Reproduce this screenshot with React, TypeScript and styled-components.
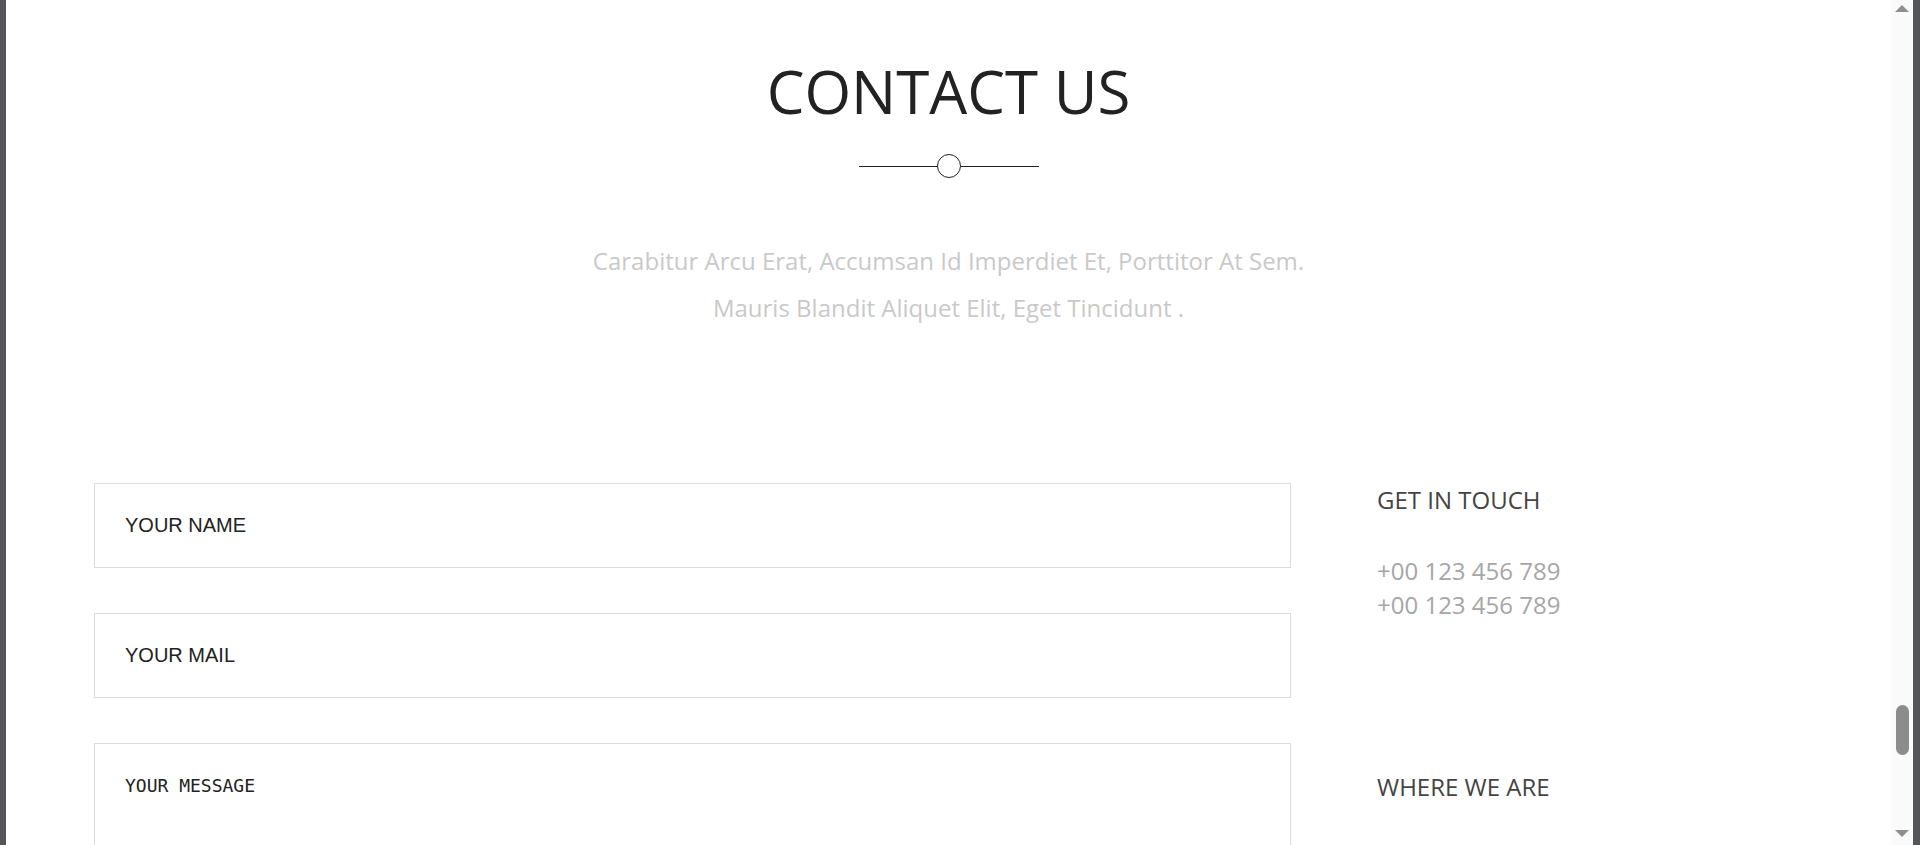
import React from "react";
import styled, { createGlobalStyle } from "styled-components";

const Global = createGlobalStyle`
  html, body {
    margin: 0;
    padding: 0;
    height: 845px;
    overflow: hidden;
    background: #55565b;
  }
  * { box-sizing: border-box; }
`;

const Frame = styled.div`
  display: flex;
  width: 1920px;
  height: 845px;
  background: #55565b;
`;

const Edge = styled.div<{ $w: number }>`
  flex: 0 0 ${(p) => p.$w}px;
  background: #55565b;
`;

const Page = styled.main`
  flex: 1 1 auto;
  background: #ffffff;
  overflow: hidden;
  display: flex;
  flex-direction: column;
  align-items: center;
`;

const Title = styled.h1`
  margin: 61px 0 0;
  font-family: "Open Sans", sans-serif;
  font-weight: 400;
  font-size: 60px;
  line-height: 60px;
  color: #222222;
`;

const Divider = styled.div`
  margin-top: 33px;
  display: flex;
  align-items: center;
  height: 24px;
`;

const Rule = styled.span`
  width: 78px;
  height: 1px;
  background: #222222;
`;

const Ring = styled.span`
  width: 24px;
  height: 24px;
  border: 1px solid #222222;
  border-radius: 50%;
  background: #fff;
`;

const Lead = styled.p`
  margin: 59px 0 0;
  font-family: "Open Sans", sans-serif;
  font-size: 24px;
  line-height: 47px;
  color: #c9c9c9;
  text-align: center;
`;

const Body = styled.section`
  align-self: stretch;
  margin-top: 152px;
  padding-left: 88px;
  display: grid;
  grid-template-columns: 1197px 1fr;
  column-gap: 86px;
  align-items: start;
`;

const Form = styled.form`
  display: flex;
  flex-direction: column;
  gap: 45px;
`;

const Field = styled.input`
  height: 85px;
  width: 100%;
  border: 1px solid #dcdcdc;
  padding: 0 30px;
  font-family: "Liberation Sans", Arial, sans-serif;
  font-size: 20px;
  color: #222;
  outline: none;
  background: #fff;
  &::placeholder { color: #222222; opacity: 1; }
`;

const Message = styled.textarea`
  width: 100%;
  height: 260px;
  border: 1px solid #dcdcdc;
  padding: 31px 30px;
  font-family: "DejaVu Sans Mono", monospace;
  font-size: 18px;
  line-height: 21px;
  color: #222;
  resize: none;
  outline: none;
  background: #fff;
  &::placeholder { color: #222222; opacity: 1; }
`;

const Aside = styled.aside`
  display: flex;
  flex-direction: column;
  font-family: "Open Sans", sans-serif;
`;

const AsideTitle = styled.h3<{ $gap?: number }>`
  margin: ${(p) => p.$gap ?? 0}px 0 0;
  font-weight: 400;
  font-size: 24px;
  line-height: 34px;
  color: #444444;
`;

const Phones = styled.div`
  margin-top: 37px;
  font-size: 24px;
  line-height: 34px;
  color: #a6a6a6;
`;

const Track = styled.div`
  flex: 0 0 22px;
  background: #fafafa;
  display: flex;
  flex-direction: column;
  align-items: center;
  padding: 5px 0 8px 0;
`;

const Arrow = styled.span<{ $down?: boolean }>`
  width: 0;
  height: 0;
  border-left: 7px solid transparent;
  border-right: 7px solid transparent;
  ${(p) =>
    p.$down
      ? "border-top: 7px solid #8f8f8f;"
      : "border-bottom: 7px solid #8f8f8f;"}
`;

const ThumbArea = styled.div`
  flex: 1;
  display: flex;
  flex-direction: column;
  align-items: center;
  padding-top: 693px;
`;

const Thumb = styled.span`
  width: 13px;
  height: 50px;
  border-radius: 7px;
  background: #8c8c8c;
`;

export default function App() {
  return (
    <>
      <Global />
      <Frame>
        <Edge $w={6} />
        <Page>
          <Title>CONTACT US</Title>
          <Divider>
            <Rule />
            <Ring />
            <Rule />
          </Divider>
          <Lead>
            Carabitur Arcu Erat, Accumsan Id Imperdiet Et, Porttitor At Sem.
            <br />
            Mauris Blandit Aliquet Elit, Eget Tincidunt .
          </Lead>
          <Body>
            <Form onSubmit={(e) => e.preventDefault()}>
              <Field placeholder="YOUR NAME" />
              <Field placeholder="YOUR MAIL" />
              <Message placeholder="YOUR MESSAGE" />
            </Form>
            <Aside>
              <AsideTitle>GET IN TOUCH</AsideTitle>
              <Phones>
                +00 123 456 789
                <br />
                +00 123 456 789
              </Phones>
              <AsideTitle $gap={148}>WHERE WE ARE</AsideTitle>
            </Aside>
          </Body>
        </Page>
        <Track>
          <Arrow />
          <ThumbArea>
            <Thumb />
          </ThumbArea>
          <Arrow $down />
        </Track>
        <Edge $w={7} />
      </Frame>
    </>
  );
}
